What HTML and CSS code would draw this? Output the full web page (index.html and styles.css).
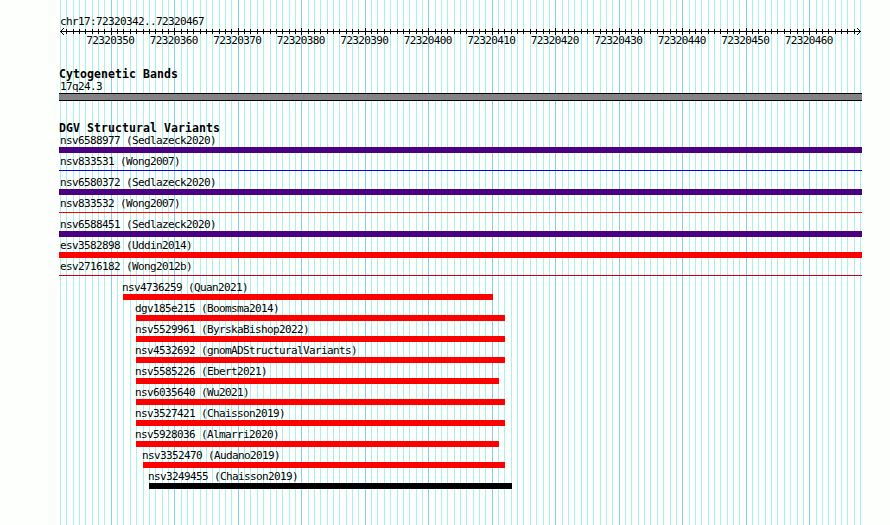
FILE: index.html
```
<!DOCTYPE html>
<html lang="en">

<head>
    <meta charset="UTF-8">
    <title>chr17:72320342..72320467</title>
    <link rel="stylesheet" href="styles.css">
</head>

<body>
    <div class="browser">
        <svg class="grid" id="grid" width="890" height="525"></svg>

        <div class="region">chr17:72320342..72320467</div>
        <svg class="ruler" id="ruler" width="890" height="9"></svg>
        <div class="numbers">
            <span>72320350</span>
            <span>72320360</span>
            <span>72320370</span>
            <span>72320380</span>
            <span>72320390</span>
            <span>72320400</span>
            <span>72320410</span>
            <span>72320420</span>
            <span>72320430</span>
            <span>72320440</span>
            <span>72320450</span>
            <span>72320460</span>
        </div>

        <div class="track cyto">
            <h2>Cytogenetic Bands</h2>
            <div class="label">17q24.3</div>
            <div class="band"></div>
        </div>

        <div class="track">
            <h2>DGV Structural Variants</h2>
            <div id="variants"></div>
        </div>
    </div>

    <script src="script.js"></script>
</body>

</html>
```
FILE: styles.css
```
body {
    margin: 0;
    background-color: #fdfffc;
    color: #000;
    font-family: "DejaVu Sans Mono", "Liberation Mono", monospace;
    font-size: 11px;
    letter-spacing: -0.622px;
}

.browser {
    position: relative;
    box-sizing: border-box;
    width: 890px;
    height: 525px;
    padding-top: 15px;
    overflow: hidden;
}

svg {
    display: block;
    shape-rendering: crispEdges;
}

.grid {
    position: absolute;
    top: 0;
    left: 0;
    z-index: -1;
}

.minor {
    fill: #afeeee;
}

.major {
    fill: #87ceeb;
}

.region {
    height: 12px;
    line-height: 14px;
    padding-left: 60px;
}

.ruler {
    fill: #000;
}

.numbers {
    display: grid;
    grid-template-columns: repeat(12, 63.49px);
    height: 12px;
    line-height: 12px;
    padding-left: 78.6px;
    margin-top: -1px;
    text-align: center;
}

.track {
    padding-left: 59px;
    padding-right: 28px;
}

.cyto {
    margin-top: 21px;
    height: 54px;
}

h2 {
    margin: 0;
    height: 12px;
    line-height: 12px;
    font-size: 11.5px;
    font-weight: bold;
    letter-spacing: 0.077px;
}

.label {
    height: 13px;
    line-height: 14px;
    padding-left: 1px;
    white-space: nowrap;
}

.band {
    box-sizing: border-box;
    height: 8px;
    border-top: 1px solid #000;
    border-bottom: 1px solid #000;
    background-color: #848284;
}

.variant {
    height: 21px;
}

.inner .label {
    padding-left: 0;
    margin-left: -1px;
}

.bar {
    height: 6px;
}

.thin .bar {
    height: 1px;
    margin-top: 2px;
}

.indigo { background-color: #4b0082; }
.red { background-color: #ff0000; }
.blue { background-color: #0000ff; }
.darkred { background-color: #c60018; }
.black { background-color: #000; }
```
FILE: script.js
```
const LEFT = 60;
const STEP = 800 / 126;

// name, left, right, color, line only
const variants = [
    ["nsv6588977 (Sedlazeck2020)", 59, 862, "indigo"],
    ["nsv833531 (Wong2007)", 59, 862, "blue", true],
    ["nsv6580372 (Sedlazeck2020)", 59, 862, "indigo"],
    ["nsv833532 (Wong2007)", 59, 862, "red", true],
    ["nsv6588451 (Sedlazeck2020)", 59, 862, "indigo"],
    ["esv3582898 (Uddin2014)", 59, 862, "red"],
    ["esv2716182 (Wong2012b)", 59, 862, "darkred", true],
    ["nsv4736259 (Quan2021)", 123, 493, "red"],
    ["dgv185e215 (Boomsma2014)", 136, 505, "red"],
    ["nsv5529961 (ByrskaBishop2022)", 136, 505, "red"],
    ["nsv4532692 (gnomADStructuralVariants)", 136, 505, "red"],
    ["nsv5585226 (Ebert2021)", 136, 499, "red"],
    ["nsv6035640 (Wu2021)", 136, 505, "red"],
    ["nsv3527421 (Chaisson2019)", 136, 505, "red"],
    ["nsv5928036 (Almarri2020)", 136, 499, "red"],
    ["nsv3352470 (Audano2019)", 143, 505, "red"],
    ["nsv3249455 (Chaisson2019)", 149, 512, "black"]
];

let lines = "";
let ticks = '<rect x="60" y="4" width="801" height="1"/>';

for (let i = 0; i <= 126; i++) {
    const x = Math.round(LEFT + i * STEP);
    const major = i % 10 === 8;
    lines += `<rect class="${major ? "major" : "minor"}" x="${x}" y="0" width="1" height="525"/>`;
    if (i > 0 && i < 126) {
        ticks += major
            ? `<rect x="${x}" y="1" width="1" height="7"/>`
            : `<rect x="${x}" y="2" width="1" height="5"/>`;
    }
}

// arrow heads
for (let i = 1; i <= 3; i++) {
    ticks += `<rect x="${60 + i}" y="${4 - i}" width="1" height="1"/><rect x="${60 + i}" y="${4 + i}" width="1" height="1"/>`;
    ticks += `<rect x="${860 - i}" y="${4 - i}" width="1" height="1"/><rect x="${860 - i}" y="${4 + i}" width="1" height="1"/>`;
}

document.getElementById("grid").innerHTML = lines;
document.getElementById("ruler").innerHTML = ticks;

document.getElementById("variants").innerHTML = variants.map(([name, left, right, color, thin]) =>
    `<div class="variant ${thin ? "thin" : ""} ${left > 59 ? "inner" : ""}" style="margin-left: ${left - 59}px; width: ${right - left}px">
        <div class="label">${name}</div>
        <div class="bar ${color}"></div>
    </div>`
).join("");
```
